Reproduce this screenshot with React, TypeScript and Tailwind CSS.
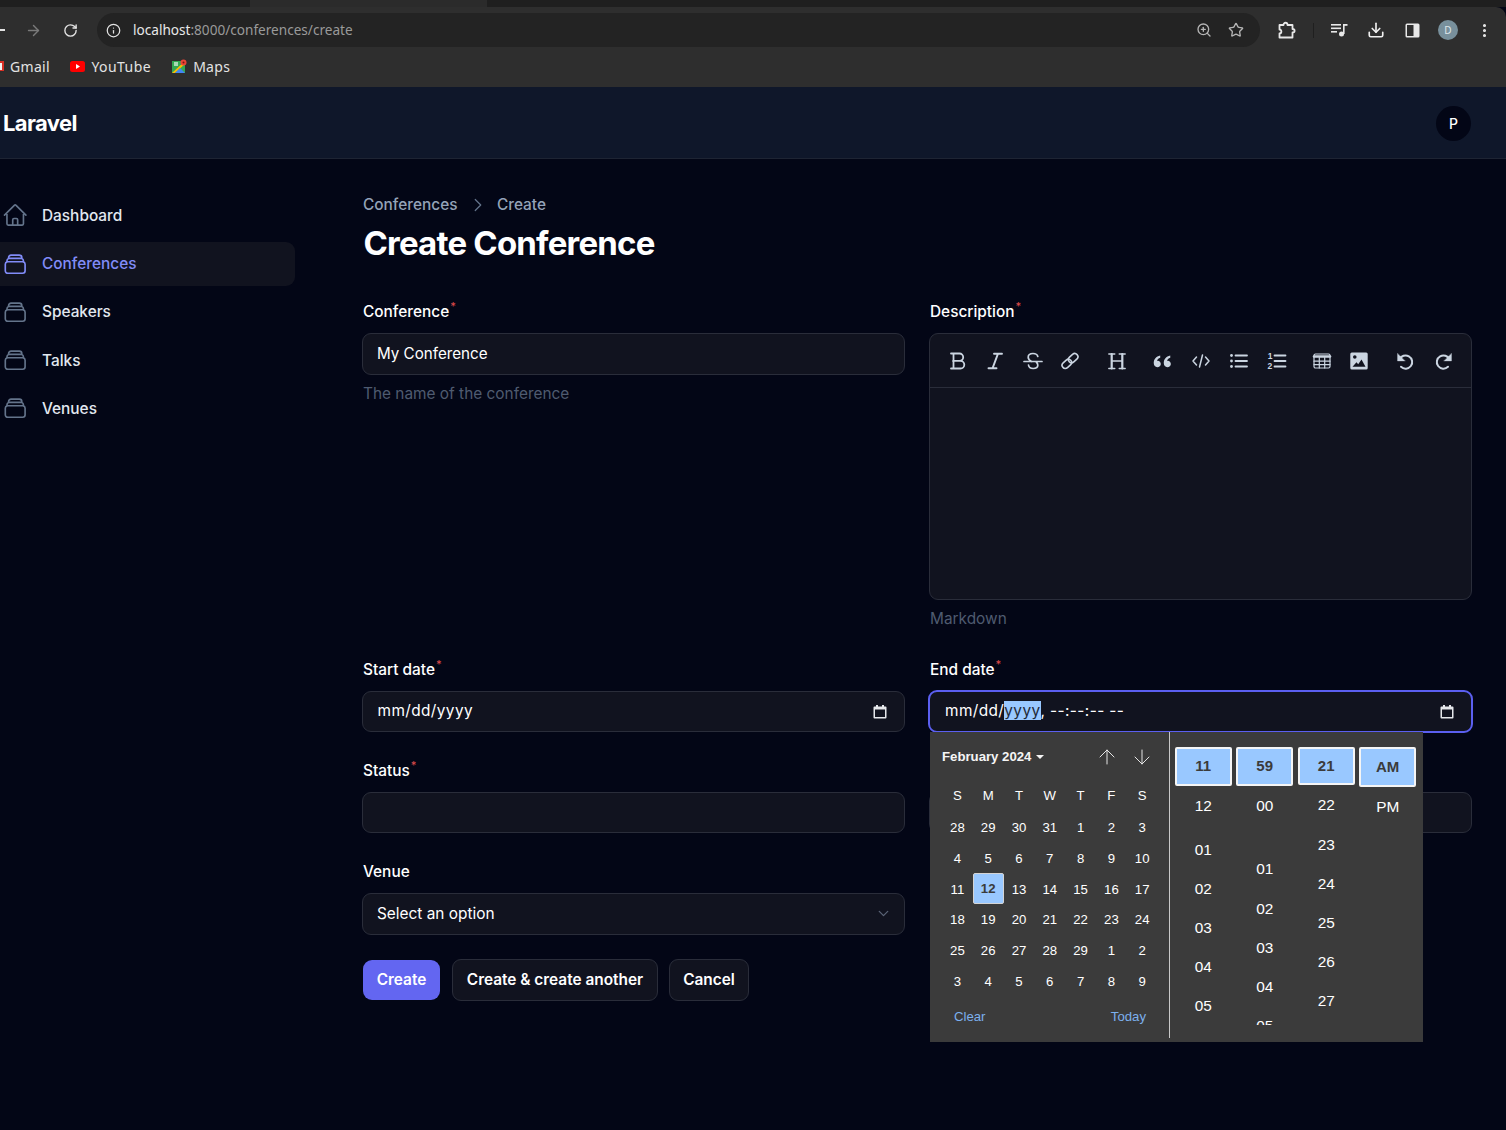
import React from "react";
import { ChevronDown, ChevronRight, RotateCw, ArrowRight, ArrowUp, ArrowDown, Star, ZoomIn, Info, MoreVertical, Download } from "lucide-react";

const inter = "font-['Inter',sans-serif]";

function Stack({ active }: { active?: boolean }) {
  return (
    <svg width="26.4" height="26.4" viewBox="0 0 24 24" fill="none" stroke="currentColor" strokeWidth="1.5" strokeLinecap="round" strokeLinejoin="round" className={active ? "text-[#818cf8] shrink-0" : "text-[#64748b] shrink-0"}>
      <path d="M6 6.878V6a2.250 2.250 0 012.250-2.250h7.500A2.250 2.250 0 0118 6v.878m-12 0c.235-.083.487-.128.750-.128h10.500c.263 0 .515.045.750.128m-12 0A2.250 2.250 0 004.500 9v.878m13.500-3A2.250 2.250 0 0119.500 9v.878m0 0a2.246 2.246 0 00-.750-.128H5.250c-.263 0-.515.045-.750.128m15 0A2.250 2.250 0 0121 12v6a2.250 2.250 0 01-2.250 2.250H5.250A2.250 2.250 0 013 18v-6c0-.980.626-1.813 1.500-2.122" />
    </svg>
  );
}

function HomeIcon() {
  return (
    <svg width="26.4" height="26.4" viewBox="0 0 24 24" fill="none" stroke="currentColor" strokeWidth="1.5" strokeLinecap="round" strokeLinejoin="round" className="text-[#64748b] shrink-0">
      <path d="M2.250 12l8.954-8.955c.440-.439 1.152-.439 1.591 0L21.750 12M4.500 9.750v10.125c0 .621.504 1.125 1.125 1.125H9.750v-4.875c0-.621.504-1.125 1.125-1.125h2.250c.621 0 1.125.504 1.125 1.125V21h4.125c.621 0 1.125-.504 1.125-1.125V9.750M8.250 21h8.250" />
    </svg>
  );
}

const items = ["Dashboard", "Conferences", "Speakers", "Talks", "Venues"];

function Sidebar() {
  return (
    <aside className="w-[295px] shrink-0 pt-[34.700px] flex flex-col gap-[4.100px]">
      {items.map((t, i) => (
        <div key={t} className={`h-[44px] flex items-center gap-[13.600px] pl-[2px] rounded-r-[9px] ${i === 1 ? "bg-[#11131f]" : ""} ${i === 3 ? "mt-[0.300px]" : ""}`}>
          {i === 0 ? <HomeIcon /> : <Stack active={i === 1} />}
          <span className={`text-[15.400px] font-medium ${i === 1 ? "text-[#818cf8]" : "text-[#e2e8f0]"}`}>{t}</span>
        </div>
      ))}
    </aside>
  );
}

function Label({ text, req = true }: { text: string; req?: boolean }) {
  return (
    <div className="h-[26.400px] pt-[1.200px] flex ml-[1px] text-[15.400px] leading-[26.400px] font-medium text-white">
      {text}
      {req && <sup className="text-[#dc4a4a] text-[11px] font-medium leading-[22px] top-0 ml-[1px] -mt-[4px]">*</sup>}
    </div>
  );
}

const boxCls = "rounded-[9px] border border-[#2a2d3a] bg-[#11131f] flex items-center px-[14px] text-white";

function CalIcon() {
  return (
    <svg width="14" height="15" viewBox="0 0 14 15" className="shrink-0">
      <path d="M3 1h2v1.500h4V1h2v1.500h1.500A1 1 0 0 1 13.500 3.500v10a1 1 0 0 1-1 1h-11a1 1 0 0 1-1-1v-10a1 1 0 0 1 1-1H3z" fill="#e5e7eb" />
      <rect x="2" y="5.500" width="10" height="7.500" fill="#11131f" />
    </svg>
  );
}

function DateValue({ children, focus }: { children: React.ReactNode; focus?: boolean }) {
  return (
    <div className={`rounded-[9px] bg-[#11131f] flex items-center justify-between pr-[17px] text-[15.400px] tracking-[0.4px] text-white ${focus ? "pl-[15px] border-2 border-[#5b5ff0] h-[43px] -my-[1px] -mx-[1px]" : "pl-[14.500px] h-[41px] border border-[#2a2d3a]"}`}>
      <span className="-mt-[2px]">{children}</span>
      <CalIcon />
    </div>
  );
}

const s = { width: 20, height: 20, viewBox: "0 0 20 20", fill: "none", stroke: "#cbd5e1", strokeWidth: 1.5, strokeLinecap: "round" as const, strokeLinejoin: "round" as const };

const Tools = [
  { x: 0, el: <svg {...s} strokeWidth={1.800}><path d="M3 2.500h8.500a3.700 3.700 0 0 1 0 7.400H5M3 17.500h9.500a3.800 3.800 0 0 0 0-7.600H5M5.500 2.500v15" /></svg> },
  { x: 37, el: <svg {...s} strokeWidth={1.900}><path d="M9 2.700h8M3.500 17.300h8M13 2.700 7.500 17.300" /></svg> },
  { x: 75, el: <svg {...s} strokeWidth={1.700}><path d="M1 10.500h18M14.800 5.500C14.300 3.500 12.500 2.500 10 2.500 7 2.500 5.200 4 5.200 6.200c0 1.500.8 3 3.400 4.300M5.500 14c.300 2.300 2.200 3.500 4.700 3.500 2.800 0 4.600-1.200 4.600-3.200 0-1-.3-2.300-1.500-3.300" /></svg> },
  { x: 112, el: <svg {...s} strokeWidth={1.600}><g transform="rotate(-42 10 10)"><rect x="0.500" y="6.800" width="10.500" height="6.400" rx="3.200" /><rect x="9" y="6.800" width="10.500" height="6.400" rx="3.200" /></g></svg> },
  { x: 159, el: <svg {...s} strokeWidth={1.400}><path d="M1.800 3h6M12.200 3h6M1.800 17.500h6M12.200 17.500h6M4.700 10H15.300" /><path d="M4.700 3v14.500M15.300 3v14.500" strokeWidth={2.200} /></svg> },
  { x: 204, el: <svg {...s} stroke="none"><g transform="translate(-1.800 -1.500) scale(1.180)"><path fill="#cbd5e1" d="M8.500 5C5 5.800 3 8 3 11.500 3 13.800 4.300 15 6 15s3-1.200 3-2.800-1.200-2.700-2.500-2.700c-.3 0-.6 0-.8.100.3-1.200 1.300-2.200 2.800-2.700zM17 5c-3.500.8-5.500 3-5.500 6.500 0 2.300 1.300 3.500 3 3.500s3-1.200 3-2.800-1.200-2.700-2.500-2.700c-.3 0-.6 0-.8.100.3-1.200 1.300-2.200 2.800-2.700z" /></g></svg> },
  { x: 243, el: <svg {...s}><path d="M5.500 6 2 10l3.500 4M14.500 6 18 10l-3.500 4M11.500 4 8.500 16" /></svg> },
  { x: 281, el: <svg {...s} strokeWidth={1.800}><path d="M6.500 4.500H18M6.500 10H18M6.500 15.500H18" /><circle cx="2.500" cy="4.500" r="1.400" fill="#cbd5e1" stroke="none" /><circle cx="2.500" cy="10" r="1.400" fill="#cbd5e1" stroke="none" /><circle cx="2.500" cy="15.500" r="1.400" fill="#cbd5e1" stroke="none" /></svg> },
  { x: 319, el: <svg {...s} strokeWidth={1.800}><path d="M7.500 4.500h11M7.500 10h11M7.500 15.500h11" /><text x="0.800" y="8" fontSize="8.500" fontWeight="700" fill="#cbd5e1" stroke="none" fontFamily="Liberation Sans, sans-serif">1</text><text x="0.500" y="17.800" fontSize="8.500" fontWeight="700" fill="#cbd5e1" stroke="none" fontFamily="Liberation Sans, sans-serif">2</text></svg> },
  { x: 364, el: <svg {...s} strokeWidth={1.200}><rect x="2" y="3" width="16" height="14" rx="1.500" /><path d="M2 5.500h16" strokeWidth={2.500} /><path d="M2 10.200h16M2 13.600h16M7.300 6.500V17M12.700 6.500V17" /></svg> },
  { x: 401, el: <svg {...s} stroke="none"><path fillRule="evenodd" fill="#cbd5e1" d="M2.800 1.500h14.400a1.500 1.500 0 0 1 1.500 1.500v14a1.500 1.500 0 0 1-1.500 1.500H2.800A1.500 1.500 0 0 1 1.300 17V3a1.500 1.500 0 0 1 1.500-1.500zM3.500 15.800h13L12.500 8.500l-3.300 4.700-1.700-2zM5.800 4.200a1.800 1.800 0 1 0 0 3.600 1.800 1.800 0 0 0 0-3.600z" /></svg> },
  { x: 447, el: <svg {...s} strokeWidth={2}><path d="M4.500 8.500A6.600 6.600 0 1 1 6 15.800" /><path d="M2.500 2.500v7.500H10z" fill="#cbd5e1" strokeWidth={0.300} /></svg> },
  { x: 486, el: <svg {...s} strokeWidth={2}><path d="M15.500 8.500A6.600 6.600 0 1 0 14 15.800" /><path d="M17.500 2.500v7.500H10z" fill="#cbd5e1" strokeWidth={0.300} /></svg> },
];

const weeks = [
  ["28", "29", "30", "31", "1", "2", "3"],
  ["4", "5", "6", "7", "8", "9", "10"],
  ["11", "12", "13", "14", "15", "16", "17"],
  ["18", "19", "20", "21", "22", "23", "24"],
  ["25", "26", "27", "28", "29", "1", "2"],
  ["3", "4", "5", "6", "7", "8", "9"],
];

function TimeCol({ sel, selH, list }: { sel: string; selH: string; list: { t: string; cls: string }[] }) {
  return (
    <div className="w-[57px] shrink-0 flex flex-col items-stretch">
      <div className={`${selH} border-2 border-[#f5f5f5] rounded-[2px] bg-[#99c8ff] text-[#3b3b3b] font-bold flex items-center justify-center text-[15px] shrink-0`}>{sel}</div>
      {list.map((l) => (
        <div key={l.t} className={`h-[39px] shrink-0 flex items-center justify-center text-[15.400px] text-white ${l.cls}`}>{l.t}</div>
      ))}
    </div>
  );
}

function Popover() {
  return (
    <div className="absolute left-[1px] top-[41.200px] w-[493px] h-[310px] bg-[#3b3b3b] flex font-['Liberation_Sans',sans-serif] text-white z-10">
      <div className="w-[227px] h-[306px] border-r border-r-[#c8c8c8] flex flex-col pl-[12px] shrink-0 box-content">
        <div className="h-[50px] flex items-center justify-between pr-[15px]">
          <div className="flex items-center gap-[5px] text-[13.200px] font-bold text-[#f5f5f5]">
            February 2024
            <span className="w-0 h-0 border-l-[4px] border-r-[4px] border-t-[4px] border-l-transparent border-r-transparent border-t-[#f5f5f5]" />
          </div>
          <div className="flex gap-[11px]">
            <ArrowUp size={24} strokeWidth={1} className="text-[#e5e5e5]" />
            <ArrowDown size={24} strokeWidth={1} className="text-[#e5e5e5]" />
          </div>
        </div>
        <div className="grid grid-cols-[repeat(7,30.800px)] h-[32.500px] text-[13.200px] items-center justify-items-center -mt-[2px]">
          {["S", "M", "T", "W", "T", "F", "S"].map((d, i) => (
            <div key={i} className="-mt-[1px]">{d}</div>
          ))}
        </div>
        <div className="grid grid-cols-[repeat(7,30.800px)] auto-rows-[30.800px] text-[13.200px] items-center justify-items-center">
          {weeks.flat().map((d, i) =>
            d === "12" && i === 15 ? (
              <div key={i} className="w-[31px] h-[31px] -mt-[1px] bg-[#99c8ff] border border-[#d4d4d4] rounded-[2px] text-[#3b3b3b] font-bold flex items-center justify-center">{d}</div>
            ) : (
              <div key={i}>{d}</div>
            )
          )}
        </div>
        <div className="flex justify-between pl-[12px] pr-[11px] mt-[10px] text-[13.200px] text-[#7cb0ee] w-[215px]">
          <span>Clear</span>
          <span>Today</span>
        </div>
      </div>
      <div className="flex gap-[4.500px] ml-[4.700px] pt-[15px] h-[293.500px] overflow-hidden items-start">
        <TimeCol sel="11" selH="h-[39px]" list={[{ t: "12", cls: "" }, { t: "01", cls: "mt-[5px]" }, { t: "02", cls: "" }, { t: "03", cls: "" }, { t: "04", cls: "" }, { t: "05", cls: "" }]} />
        <TimeCol sel="59" selH="h-[39px]" list={[{ t: "00", cls: "" }, { t: "01", cls: "mt-[24px]" }, { t: "02", cls: "mt-[1px]" }, { t: "03", cls: "" }, { t: "04", cls: "" }, { t: "05", cls: "" }]} />
        <TimeCol sel="21" selH="h-[38px]" list={[{ t: "22", cls: "" }, { t: "23", cls: "mt-[1px]" }, { t: "24", cls: "" }, { t: "25", cls: "" }, { t: "26", cls: "" }, { t: "27", cls: "" }]} />
        <TimeCol sel="AM" selH="h-[40px]" list={[{ t: "PM", cls: "" }]} />
      </div>
    </div>
  );
}

function Chrome() {
  const toolbarFont = "font-['Noto_Sans',sans-serif]";
  return (
    <div className={`${toolbarFont} shrink-0`}>
      <div className="h-[7px] bg-[#1f1f1f] flex">
        <div className="w-[250px] bg-[#1f1f1f]" />
        <div className="w-[237px] bg-[#2b2b2b]" />
      </div>
      <div className="h-[46px] bg-[#2e2e2e] rounded-tr-[10px] flex items-center relative">
        <div className="w-[5px] h-[2px] bg-[#e3e3e3] ml-0" />
        <ArrowRight size={17} strokeWidth={2} className="text-[#7a7a7a] ml-[20px]" />
        <RotateCw size={15} strokeWidth={2.200} className="text-[#e3e3e3] ml-[20.500px]" />
        <div className="ml-[19px] w-[1163.500px] h-[34px] rounded-full bg-[#232323] flex items-center pl-[9px] text-[13.600px]">
          <Info size={15} strokeWidth={2} className="text-[#e3e3e3]" />
          <span className="ml-[12.500px] text-[#e8e8e8]">localhost</span>
          <span className="text-[#9a9a9a]">:8000/conferences/create</span>
          <div className="ml-auto flex items-center gap-[16px] pr-[16px]">
            <ZoomIn size={16} strokeWidth={2} className="text-[#b5b5b5]" />
            <Star size={16} strokeWidth={2} className="text-[#b5b5b5]" />
          </div>
        </div>
        <svg width="18" height="18" viewBox="0 0 18 18" fill="none" stroke="#e8e8e8" strokeWidth="1.800" strokeLinejoin="round" className="ml-[18px]">
          <path d="M1.500 4h4c0-3 4-3 4 0h5v4c2.800 0 2.800 3.500 0 3.500v5H1.500v-4c2.500 0 2.500-4 0-4z" />
        </svg>
        <div className="w-[1px] h-[15px] bg-[#1f1f1f] ml-[17px]" />
        <svg width="18" height="14" viewBox="0 0 18 14" fill="#e8e8e8" className="ml-[17px]">
          <rect x="0" y="1" width="10" height="1.600" /><rect x="0" y="4.500" width="10" height="1.600" /><rect x="0" y="8" width="6" height="1.600" /><circle cx="10.500" cy="11" r="2.500" /><rect x="12" y="1" width="1.600" height="10" /><rect x="12" y="1" width="4.500" height="1.800" />
        </svg>
        <Download size={18} strokeWidth={2.200} className="text-[#f0f0f0] ml-[18px]" />
        <svg width="15" height="15" viewBox="0 0 15 15" className="ml-[19.500px]">
          <rect x="0.500" y="0.500" width="14" height="14" rx="1.500" fill="#e8e8e8" />
          <rect x="2" y="2" width="6.500" height="11" fill="#2e2e2e" />
        </svg>
        <div className="w-[20px] h-[20px] ml-[18.500px] rounded-full bg-[#78909c] flex items-center justify-center text-[10px] text-[#dfe7ea]">D</div>
        <MoreVertical size={17} strokeWidth={2.400} className="text-[#e8e8e8] ml-[17.500px]" />
      </div>
      <div className="h-[34px] pb-[8px] bg-[#2e2e2e] flex items-center text-[14px] text-[#e3e3e3] tracking-[0.3px]">
        <svg width="4" height="10" viewBox="0 0 4 10" className="mr-[6px]">
          <rect width="4" height="10" fill="#d93025" />
          <rect width="2" height="7" y="2" fill="#f4f4f4" />
        </svg>
        <span>Gmail</span>
        <svg width="15" height="11" viewBox="0 0 15 11" className="ml-[20.500px] mr-[6px]">
          <rect width="15" height="11" rx="2.500" fill="#f00" />
          <path d="M6 3v5l4-2.500z" fill="#fff" />
        </svg>
        <span className="tracking-[0.45px]">YouTube</span>
        <svg width="15" height="15" viewBox="0 0 15 15" className="ml-[21px] mr-[6px]">
          <rect y="2" width="13" height="12" fill="#34a853" />
          <path d="M0 14 13 2v3L3 14z" fill="#fbbc04" />
          <path d="M3 14l5-5 5 5z" fill="#4285f4" />
          <rect x="2" y="3" width="4" height="4" fill="#a8dab5" />
          <circle cx="11.500" cy="3.500" r="3" fill="#ea4335" />
          <circle cx="11.500" cy="3.500" r="1" fill="#7a1a12" />
        </svg>
        <span>Maps</span>
      </div>
    </div>
  );
}

export default function App() {
  return (
    <div className={`w-[1506px] h-[1130px] overflow-hidden bg-[#030616] flex flex-col ${inter}`}>
      <Chrome />
      <header className="h-[72px] shrink-0 pt-[2px] bg-[#0f172a] border-b border-[#1e2433] flex items-center justify-between pl-[3px] pr-[35px]">
        <div className="text-[22px] font-bold tracking-[-0.6px] text-white">Laravel</div>
        <div className="w-[35px] h-[35px] rounded-full bg-[#030616] flex items-center justify-center text-[14px] font-medium text-white">P</div>
      </header>
      <div className="flex flex-1">
        <Sidebar />
        <main className="ml-[67px] w-[1110px] pt-[34px]">
          <div className="flex items-center text-[15.400px] font-medium text-[#94a3b8] h-[24px]">
            <span className="ml-[1px]">Conferences</span>
            <ChevronRight size={22} strokeWidth={1.300} className="text-[#64748b] ml-[9.500px] mr-[8px]" />
            <span>Create</span>
          </div>
          <h1 className="text-[33px] font-bold leading-[39px] tracking-[-0.8px] text-white mt-[7px] ml-[1.500px]">Create Conference</h1>
          <form className="grid grid-cols-2 gap-x-[24px] gap-y-[24.800px] mt-[35px] w-[1110px]">
            <div className="flex flex-col gap-[8.800px] pb-[0.600px]">
              <Label text="Conference" />
              <div className={`${boxCls} h-[42px] text-[15.200px]`}><span className="-mt-[0.500px]">My Conference</span></div>
              <div className="text-[15.400px] leading-[22px] text-[#4f5b70] -mt-[0.800px] ml-[1px]">The name of the conference</div>
            </div>
            <div className="flex flex-col gap-[8.800px] pb-[0.600px]">
              <Label text="Description" />
              <div className="h-[267px] rounded-[9px] border border-[#2a2d3a] bg-[#11131f] flex flex-col">
                <div className="h-[54px] border-b border-[#2a2d3a] relative shrink-0">
                  {Tools.map((t) => (
                    <span key={t.x} className="absolute top-[17px]" style={{ left: t.x + 18 }}>{t.el}</span>
                  ))}
                </div>
              </div>
              <div className="text-[15.400px] leading-[22px] text-[#4f5b70] -mt-[0.800px] ml-[1px]">Markdown</div>
            </div>
            <div className="flex flex-col gap-[8.800px]">
              <Label text="Start date" />
              <DateValue>mm/dd/yyyy</DateValue>
            </div>
            <div className="flex flex-col gap-[8.800px] relative">
              <Label text="End date" />
              <div className="relative">
                <DateValue focus>
                  mm/dd/<span className="inline-block leading-[19px] bg-[#99c8ff] text-[#1f2937]">yyyy</span>, --:--:-- --
                </DateValue>
                <Popover />
              </div>
            </div>
            <div className="flex flex-col gap-[8.800px]">
              <Label text="Status" />
              <div className={`${boxCls} h-[41px]`} />
            </div>
            <div className="flex flex-col gap-[8.800px]">
              <Label text="" req={false} />
              <div className={`${boxCls} h-[41px]`} />
            </div>
            <div className="flex flex-col gap-[8.800px]">
              <Label text="Venue" req={false} />
              <div className={`${boxCls} h-[42px] text-[15.400px] justify-between`}>
                <span className="-mt-[0.500px]">Select an option</span>
                <ChevronDown size={17} strokeWidth={1.800} className="text-[#5b6476] -mr-[2px]" />
              </div>
            </div>
            <div />
          </form>
          <div className="flex gap-[12px] mt-[24.200px] ml-[1px] text-[15.400px] font-semibold text-white">
            <button className="h-[40px] mt-[1px] w-[77px] rounded-[9px] bg-[#6366f1]">Create</button>
            <button className="h-[42px] w-[206px] rounded-[9px] border border-[#2a2d3a] bg-[#11131f]">Create &amp; create another</button>
            <button className="h-[42px] w-[80px] -ml-[1px] rounded-[9px] border border-[#2a2d3a] bg-[#11131f]">Cancel</button>
          </div>
        </main>
      </div>
    </div>
  );
}
